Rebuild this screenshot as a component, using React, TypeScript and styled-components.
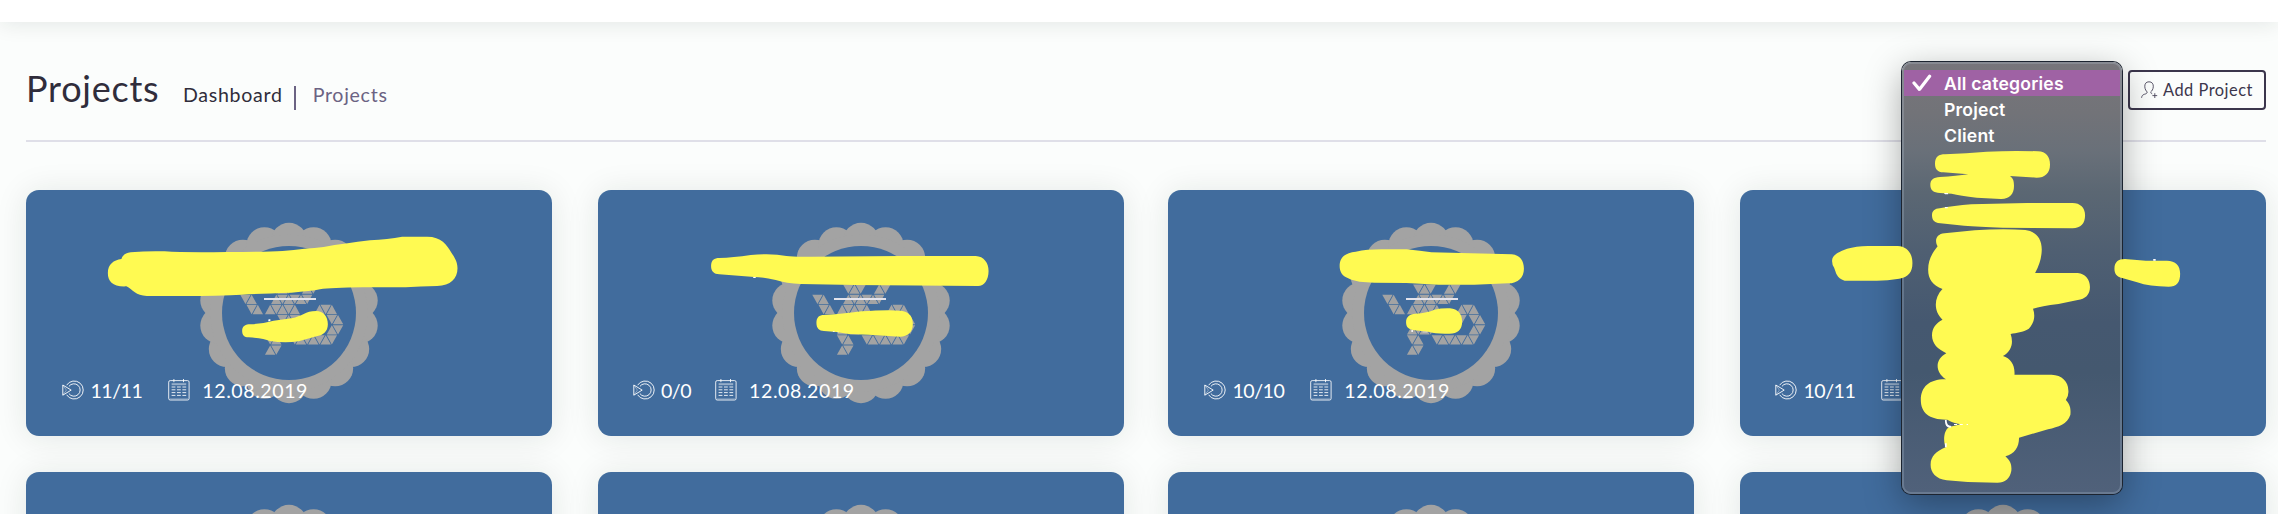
import React from "react";
import styled, { createGlobalStyle } from "styled-components";

const GlobalStyle = createGlobalStyle`
  * { box-sizing: border-box; }
  html, body { margin: 0; padding: 0; }
  body { background: #fbfdfc; overflow: hidden; font-family: Lato, "Open Sans", sans-serif; }
`;

const Page = styled.div`
  position: relative;
  width: 2278px;
  height: 514px;
  overflow: hidden;
  background: #fbfdfc;
`;

const TopBar = styled.header`
  height: 22px;
  background: #fff;
  box-shadow: 0 1px 22px rgba(20, 40, 30, 0.11);
`;

const Main = styled.main`
  padding: 0 12px 0 26px;
`;

const Heading = styled.div`
  display: flex;
  align-items: flex-start;
  justify-content: space-between;
  height: 120px;
  padding-top: 48px;
  border-bottom: 2px solid #dfdfe8;
`;

const TitleGroup = styled.div`
  display: flex;
  align-items: baseline;
  height: 44px;
  line-height: 44px;
  margin-top: -4px;
`;

const Title = styled.h1`
  margin: 0;
  width: 157px;
  font-size: 36px;
  font-weight: 400;
  letter-spacing: 0.75px;
  color: #302d3b;
`;

const Crumb = styled.span<{ $muted?: boolean }>`
  font-size: 19.6px;
  letter-spacing: 0.7px;
  color: ${(p) => (p.$muted ? "#6b6383" : "#302d3b")};
`;

const CrumbBar = styled.span`
  align-self: flex-start;
  width: 2px;
  height: 24px;
  margin: 20px 17px 0 11px;
  background: #6b6383;
`;

const AddButton = styled.button`
  display: flex;
  align-items: center;
  width: 138px;
  height: 40px;
  padding: 0 0 1px 11px;
  border: 2px solid #3b364c;
  border-radius: 4px;
  background: transparent;
  color: #3b364c;
  font: 400 16.4px Lato, sans-serif;
  letter-spacing: 0.5px;
  white-space: nowrap;
  svg { flex: none; margin-right: 5px; }
`;

const Grid = styled.section`
  display: grid;
  grid-template-columns: 572px 570px 572px 526px;
  grid-auto-rows: 246px;
  row-gap: 36px;
  padding-top: 48px;
`;

const Card = styled.article`
  display: grid;
  width: 526px;
  border-radius: 13px;
  background: #416c9d;
  box-shadow: 0 2px 32px rgba(20, 40, 30, 0.1);
  > * { grid-area: 1 / 1; }
`;

const Emblem = styled.svg`
  width: 180px;
  height: 182px;
  margin: 31.7px 0 0 173px;
`;

const Divider = styled.span<{ $shift: number }>`
  width: 52px;
  height: 2px;
  margin: 108px 0 0 ${(p) => p.$shift}px;
  background: #e2e3ec;
`;

const Meta = styled.div<{ $inset: number }>`
  display: flex;
  align-items: center;
  align-self: end;
  height: 30px;
  margin: 0 0 31px ${(p) => p.$inset}px;
  font-size: 19.6px;
  line-height: 30px;
  color: #fff;
`;

const Count = styled.span<{ $gap: number }>`
  margin: 2px ${(p) => p.$gap}px 0 6.5px;
  letter-spacing: -0.5px;
`;

const DateText = styled.span`
  margin: 2px 0 0 12px;
  letter-spacing: 0.55px;
`;

const Menu = styled.ul`
  position: absolute;
  left: 1902px;
  top: 62px;
  width: 220px;
  height: 432px;
  margin: 0;
  padding: 6px 0;
  list-style: none;
  border: 2px solid rgba(190, 205, 220, 0.24);
  border-radius: 9px;
  background: linear-gradient(#77757b 0, #727378 50px, #697079 90px, #5b6773 130px, #4f5f72 190px, #455870 260px, #44586f 310px, #50617a 430px) border-box;
  box-shadow: 0 0 0 1px #1c2430, 0 10px 36px rgba(0, 0, 0, 0.34);
  font-family: Inter, sans-serif;
`;

const MenuItem = styled.li<{ $active?: boolean }>`
  display: flex;
  align-items: center;
  height: 26px;
  color: #fff;
  font-size: 17.6px;
  font-weight: 600;
  letter-spacing: 0.2px;
  background: ${(p) => (p.$active ? "#9f62a4" : "transparent")};
`;

const Mark = styled.span`
  display: flex;
  width: 40px;
  padding-left: 7px;
`;

const Annotations = styled.svg`
  position: absolute;
  left: 0;
  top: 0;
  pointer-events: none;
`;

/* Mosaic cells by row; a cell's parity decides whether it points up or down. */
const mosaic: Array<[number, number[]]> = [
  [-1, [6, 7, 8, 11, 12]],
  [0, [1, 2, 6, 7, 8, 9, 10, 11]],
  [1, [2, 3, 5, 6, 7, 8, 9, 13, 14, 15]],
  [2, [7, 8, 9, 13, 15, 16]],
  [3, [5, 6, 7, 8, 15, 16]],
  [4, [5, 6, 9, 10, 11, 12, 13, 14, 15]],
  [5, [5, 6]],
];

function triangle(row: number, j: number) {
  const x = -49.7 + 6.17 * j;
  const top = -18.7 + 10.15 * row + 0.4;
  const bottom = top + 9.3;
  const up = (row + j) % 2 === 0;
  const half = 5.2;
  return up
    ? `M${x} ${top}L${x + half} ${bottom}H${x - half}Z`
    : `M${x} ${bottom}L${x + half} ${top}H${x - half}Z`;
}

function Logo() {
  const lobes = Array.from({ length: 18 }, (_, i) => (i * Math.PI) / 9 + Math.PI / 2);
  return (
    <Emblem viewBox="-90 -91 180 182">
      <g fill="#a3a3a3">
        {lobes.map((a, i) => (
          <circle key={i} cx={71.8 * Math.cos(a)} cy={72.2 * Math.sin(a)} r={18} />
        ))}
        <circle r={78.6} />
      </g>
      <circle r={67} fill="#416c9d" />
      <path
        d={mosaic.map(([r, js]) => js.map((j) => triangle(r, j)).join("")).join("")}
        fill="#a3a3a3"
      />
    </Emblem>
  );
}

function ProgressIcon() {
  return (
    <svg width="22" height="21" viewBox="0 0 22 21" fill="none" stroke="#fff" strokeOpacity="0.9">
      <path d="M4.6 5.2A9 9 0 1 1 4.6 14.8" />
      <path d="M6.9 6.4A6.2 6.2 0 1 1 6.9 13.6" />
      <path d="M.8 5V15.2L9.2 10.1Z" />
      <path d="M.8 5L4.4 10.1L.8 15.2" strokeOpacity="0.4" />
    </svg>
  );
}

function CalendarIcon() {
  return (
    <svg width="22" height="22" viewBox="0 0 22 22" fill="none" stroke="#fff" strokeOpacity="0.85">
      <rect x="0.7" y="1.6" width="20.4" height="19.4" rx="1.5" />
      <path d="M5.9 0V3.2M15.5 0V3.2" />
      <path d="M3.6 5.2H18.2" strokeWidth="2" strokeOpacity="0.45" />
      <path d="M1.5 19.8H20.3" strokeOpacity="0.3" />
      <path d="M3.6 8H7.4M9 8H12.8M14.4 8H18.2M3.6 10.8H7.4M9 10.8H12.8M14.4 10.8H18.2M3.6 13.6H7.4M9 13.6H12.8M14.4 13.6H18.2M3.6 16.4H7.4M9 16.4H12.8M14.4 16.4H18.2" />
    </svg>
  );
}

function AddPersonIcon() {
  return (
    <svg width="17" height="18" viewBox="0 0 17 18" fill="none" stroke="#4a455a" strokeWidth="0.9">
      <path d="M8 .8C5 .8 3.6 2.8 3.8 5.8C4 8.4 5.2 10 6.2 11C6.1 12.6 4.9 12.9 3.3 13.3C1.4 13.9.8 15 .6 16.8M8 .8C11 .8 12.5 2.8 12.3 5.8C12.1 8.4 10.8 10.1 9.8 10.8C9.8 12.2 10.4 12.7 11.2 12.9" />
      <path d="M13.8 12.2V17M11.4 14.6H16.2" />
    </svg>
  );
}

const projects = [
  { count: "11/11", date: "12.08.2019", shift: 238, inset: 36, gap: 26 },
  { count: "0/0", date: "12.08.2019", shift: 236, inset: 34.5, gap: 24 },
  { count: "10/10", date: "12.08.2019", shift: 238, inset: 36, gap: 26 },
  { count: "10/11", date: "12.08.2019", shift: 238, inset: 35, gap: 26 },
];

/* Cards of the next row, of which only the top edge is in view. */
const upcoming = [1, 2, 3, 4];

function Marker() {
  return (
    <Annotations width="2278" height="514" viewBox="0 0 2278 514" fill="#fffa52">
      <g transform="translate(20 180) scale(.35714 .33333)">
        <path d="M284 237C288 224 296 219 310 217Q360 212 405 214Q460 218 580 216Q690 216 735 213Q800 206 850 201Q910 190 980 181Q1030 178 1070 170H1140C1180 170 1195 195 1208 218C1222 240 1225 252 1225 265C1225 295 1206 318 1168 318Q1120 319 1080 322H960Q870 323 840 328Q815 334 760 338Q640 342 590 346Q530 349 480 348H355C325 348 315 328 298 319C260 321 246 305 246 279C246 253 262 240 284 237Z" />
        <path d="M622 452C622 438 632 433 645 433Q680 431 710 422L760 415C790 409 799 393 829 393C850 393 862 410 862 433C862 455 848 467 830 469Q800 478 780 484Q740 490 700 483Q680 475 640 472C628 471 622 466 622 452Z" />
        <path d="M696 418h5v5l-6 1z" fill="#fff" />
      </g>
      <g transform="translate(590 180) scale(.35714 .33333)">
        <path d="M339 258C339 240 348 234 362 234Q400 233 450 225Q510 219 550 228Q570 231 620 230L870 228H1080C1103 229 1116 249 1116 273C1116 300 1103 318 1087 318L740 315L590 312Q550 310 520 300Q480 291 460 291L362 283C347 282 339 274 339 258Z" />
        <path d="M634 429C634 412 642 405 655 405Q720 401 760 394Q830 388 870 392C892 394 904 408 904 432C904 456 890 470 868 470L780 464L725 462Q690 455 655 453C642 453 634 445 634 429Z" />
        <path d="M457 291h7v3h-7zM680 454h5v2h-5zM692 455h5v2h-5z" fill="#fff" />
      </g>
      <g transform="translate(1160 180) scale(.35714 .33333)">
        <path d="M503 258C503 232 519 218 548 215Q580 208 620 208L690 208Q730 212 760 217L870 220L985 223C1008 225 1019 243 1019 266C1019 292 1003 310 975 310L880 314H780L690 309L600 308C570 308 545 305 527 295C510 288 503 275 503 258Z" />
        <path d="M689 427C689 411 698 402 715 401Q750 398 768 389Q790 384 812 385C834 387 846 402 846 425C846 449 832 462 808 461Q770 462 755 456L708 450C695 448 689 440 689 427Z" />
        <path d="M704 450h4v6h-4zM735 455h14v2h-14z" fill="#fff" />
      </g>
      <g transform="translate(1880 40) scale(.33333)">
        <path d="M165 371C165 350 177 343 195 343Q260 340 320 335Q400 331 474 334C498 335 510 350 510 374C510 399 495 413 470 413L390 408C400 415 402 424 402 438C402 463 387 478 362 477L290 473Q240 467 215 461L180 459C160 458 151 450 151 435C151 419 160 412 180 411Q230 408 265 403L190 397C173 396 165 388 165 371Z" />
        <path d="M193 459h8l4 4h-10z" fill="#fff" />
      </g>
      <g transform="translate(1730 180) scale(.34949 .33333)">
        <path d="M292 243C292 222 315 215 335 206Q360 199 395 198H480C505 199 522 218 522 249C522 278 510 291 484 296Q450 302 420 302H328C304 293 304 279 298 263Q292 254 292 243Z" />
        <path d="M1100 266C1100 246 1111 237 1130 237L1190 242H1250C1275 242 1288 257 1288 281C1288 307 1278 320 1255 320Q1200 320 1165 307L1122 294C1106 289 1100 281 1100 266Z" />
        <path d="M578 106C578 93 586 86 600 85Q640 77 690 73L850 69H980C1002 69 1016 83 1016 106C1016 130 1004 145 980 145L780 143Q710 140 670 137L595 129C584 127 578 119 578 106Z" />
        <path d="M594 199C585 183 589 162 614 160L700 151Q780 145 845 150C875 154 893 175 892 211Q891 245 873 279H995C1017 281 1030 299 1030 321C1030 345 1016 357 995 360L940 372Q890 378 867 386C875 410 869 430 855 446C838 457 820 458 803 462C812 490 805 513 781 528C803 535 816 555 814 584H920C950 585 968 605 968 630Q970 647 961 660C975 675 975 690 974 704C965 733 940 740 910 748L827 773C827 802 814 822 788 829C805 845 806 858 805 872C801 896 787 908 765 908L680 906L620 901C589 896 574 878 574 854C574 829 590 814 617 802C609 781 612 751 627 741L660 733Q636 728 622 719C570 720 546 698 546 660C546 620 571 597 618 598C584 573 588 537 619 520C594 507 578 492 578 466C578 443 590 429 608 419C583 395 582 354 608 327C580 315 567 298 567 269C567 240 578 220 594 199Z" />
        <path d="M615 720h5c0 12 4 17 14 18l-3 5c-12 0-16-8-16-23zM641 732h9v3h-9zM657 732h9v3h-9zM677 732h4v3h-4zM615 790h5v12h-5zM615 81h8v4h-8zM614 39h10v3h-10zM1211 237h7v5h-7z" fill="#fff" />
      </g>
    </Annotations>
  );
}

export default function App() {
  return (
    <Page>
      <GlobalStyle />
      <TopBar />
      <Main>
        <Heading>
          <TitleGroup>
            <Title>Projects</Title>
            <Crumb>Dashboard</Crumb>
            <CrumbBar />
            <Crumb $muted>Projects</Crumb>
          </TitleGroup>
          <AddButton>
            <AddPersonIcon />
            Add Project
          </AddButton>
        </Heading>
        <Grid>
          {projects.map((p, i) => (
            <Card key={i}>
              <Logo />
              <Divider $shift={p.shift} />
              <Meta $inset={p.inset}>
                <ProgressIcon />
                <Count $gap={p.gap}>{p.count}</Count>
                <CalendarIcon />
                <DateText>{p.date}</DateText>
              </Meta>
            </Card>
          ))}
          {upcoming.map((id) => (
            <Card key={`next-${id}`}>
              <Logo />
            </Card>
          ))}
        </Grid>
      </Main>
      <Menu>
        <MenuItem $active>
          <Mark>
            <svg width="22" height="18" viewBox="0 0 22 18" fill="none" stroke="#fff" strokeWidth="3.2" strokeLinecap="round" strokeLinejoin="round">
              <path d="M3 9L8.4 15.4L18.6 2.2" />
            </svg>
          </Mark>
          All categories
        </MenuItem>
        <MenuItem><Mark />Project</MenuItem>
        <MenuItem><Mark />Client</MenuItem>
      </Menu>
      <Marker />
    </Page>
  );
}
